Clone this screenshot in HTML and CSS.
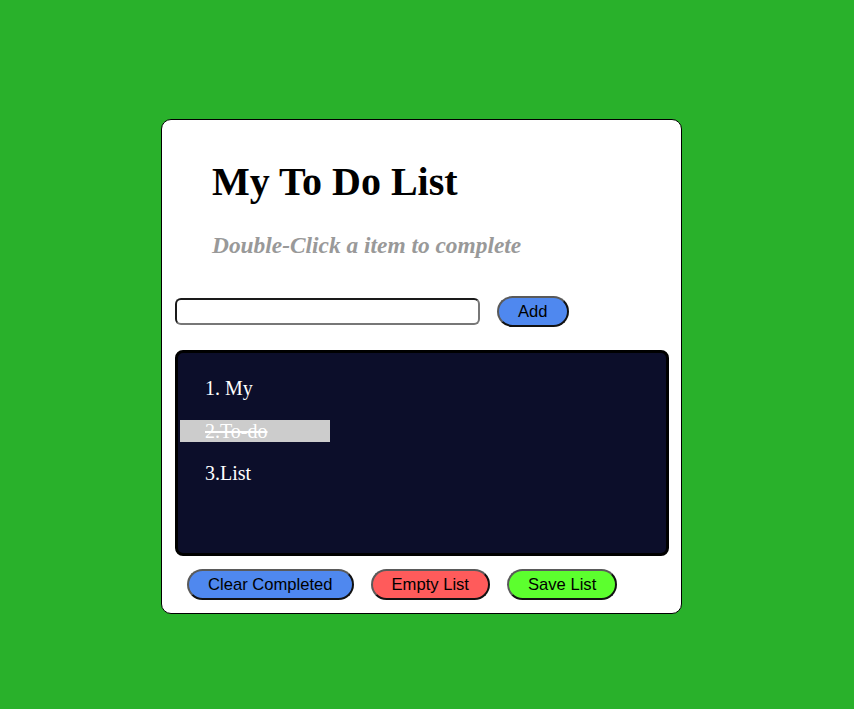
FILE: index.html
```html
<!DOCTYPE html>
<html>
<head>
<meta charset="utf-8">
<link rel="stylesheet" href="styles.css">
</head>
<body>
<div class="card">
  <h1 class="title">My To Do List</h1>
  <h2 class="subtitle">Double-Click a item to complete</h2>
  <div class="entry">
    <input class="entry-input" type="text">
    <button class="btn btn-blue">Add</button>
  </div>
  <ul class="list">
    <li class="item">1. My</li>
    <li class="item done">2.To-do</li>
    <li class="item">3.List</li>
  </ul>
  <div class="actions">
    <button class="btn btn-blue">Clear Completed</button>
    <button class="btn btn-red">Empty List</button>
    <button class="btn btn-green">Save List</button>
  </div>
</div>
</body>
</html>
```

FILE: styles.css
```css
html, body {
  margin: 0;
  padding: 0;
}
body {
  background: #29b12b;
  font-family: "Liberation Serif", "Times New Roman", serif;
  height: 709px;
  overflow: hidden;
}
.card {
  box-sizing: border-box;
  width: 521px;
  margin: 119px 0 0 161px;
  background: #fff;
  border: 1px solid #000;
  border-radius: 10px;
  padding: 39px 12px 13px 13px;
}
.title {
  margin: 0;
  padding-left: 37px;
  font-size: 40px;
  font-weight: bold;
  color: #000;
  line-height: 46px;
}
.subtitle {
  margin: 27px 0 0 0;
  padding-left: 37px;
  font-size: 23.4px;
  font-weight: bold;
  font-style: italic;
  color: #999;
  line-height: 27px;
}
.entry {
  display: flex;
  align-items: center;
  gap: 17px;
  margin-top: 37px;
  height: 31px;
}
.entry-input {
  box-sizing: border-box;
  width: 305px;
  height: 27px;
  margin: 0;
  padding: 0 4px;
  border: 2px solid;
  border-color: #1a1a1a #777 #777 #1a1a1a;
  border-radius: 6px;
  background: #fff;
}
.btn {
  box-sizing: border-box;
  height: 31px;
  margin: 0;
  padding: 0 19px;
  border: 2px solid;
  border-color: #5a5a5a #111 #111 #5a5a5a;
  border-radius: 16px;
  font-family: "Liberation Sans", Arial, sans-serif;
  font-size: 16.6px;
  color: #000;
  line-height: 27px;
}
.btn-blue { background: #4f88ef; }
.btn-red { background: #ff5b5b; }
.btn-green { background: #5cff2e; }
.list {
  box-sizing: border-box;
  list-style: none;
  margin: 23px 0 0 0;
  padding: 24px 0 0 2px;
  width: 494px;
  height: 206px;
  background: #0c0e2a;
  border: 3px solid #000;
  border-radius: 8px;
}
.item {
  box-sizing: border-box;
  width: 150px;
  height: 22px;
  line-height: 22px;
  padding-left: 25px;
  margin-bottom: 20.5px;
  font-size: 20px;
  color: #fff;
}
.item.done {
  background: #cccccc;
  text-decoration: line-through;
}
.actions {
  display: flex;
  gap: 17px;
  margin-top: 13px;
  padding-left: 12px;
}
```
